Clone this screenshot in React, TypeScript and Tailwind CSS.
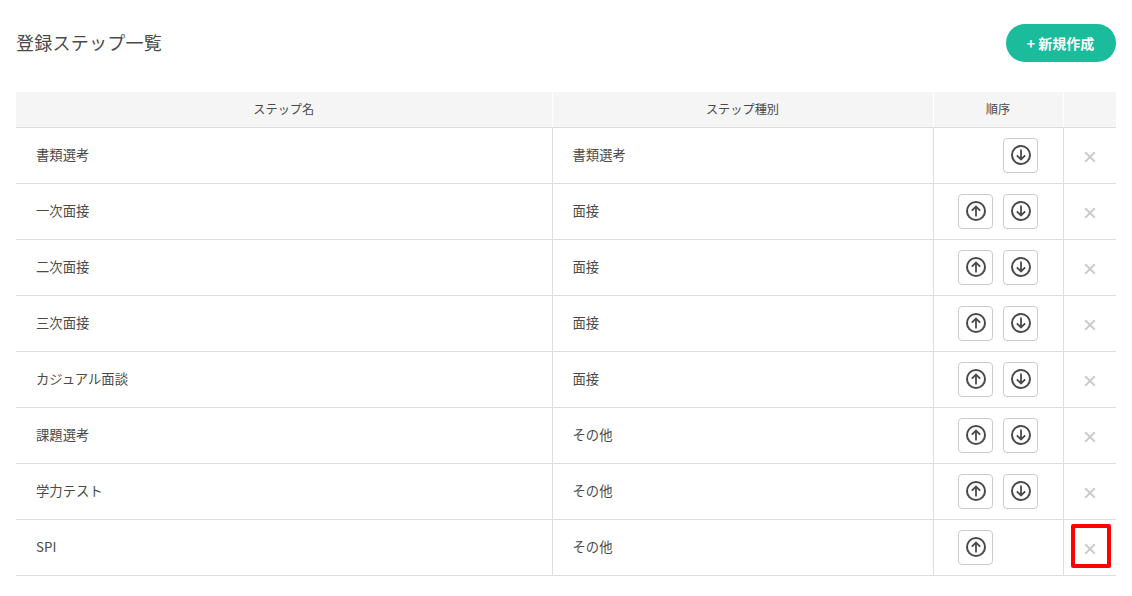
import React from "react";

const rows = [
  { name: "書類選考", type: "書類選考", up: false, down: true },
  { name: "一次面接", type: "面接", up: true, down: true },
  { name: "二次面接", type: "面接", up: true, down: true },
  { name: "三次面接", type: "面接", up: true, down: true },
  { name: "カジュアル面談", type: "面接", up: true, down: true },
  { name: "課題選考", type: "その他", up: true, down: true },
  { name: "学力テスト", type: "その他", up: true, down: true },
  { name: "SPI", type: "その他", up: true, down: false },
];

function ArrowBtn({ dir, hidden }: { dir: "up" | "down"; hidden: boolean }) {
  return (
    <button
      className={`flex h-[35px] w-[35px] items-center justify-center rounded-[4px] border border-[#cccccc] bg-white ${hidden ? "invisible" : ""}`}
    >
      <svg width="20" height="20" viewBox="0 0 20 20" fill="none" stroke="#4a4a4a" strokeWidth="2">
        <circle cx="10" cy="10" r="9" />
        {dir === "up" ? (
          <path d="M10 15.5V5.5M5.8 9.7L10 5.5L14.2 9.7" strokeWidth="1.8" />
        ) : (
          <path d="M10 4.5v10M5.8 10.3L10 14.5L14.2 10.3" strokeWidth="1.8" />
        )}
      </svg>
    </button>
  );
}

export default function App() {
  return (
    <div className="min-h-[596px] bg-white px-4 pt-6 text-[#4a4a4a] font-['Noto_Sans_CJK_JP','Noto_Sans',sans-serif]">
      <div className="flex h-[38px] items-center justify-between">
        <h1 className="-translate-y-[1px] text-[18px] tracking-[0.25px] text-[#4a4a4a]">登録ステップ一覧</h1>
        <button className="h-[38px] w-[110px] rounded-full bg-[#1abc9c] pr-[1px] text-[14px] font-bold text-white">
          + 新規作成
        </button>
      </div>
      <table className="mt-[30px] w-[1100px] table-fixed border-collapse text-[13.33px]">
        <colgroup>
          <col className="w-[536px]" />
          <col className="w-[381px]" />
          <col className="w-[130px]" />
          <col className="w-[53px]" />
        </colgroup>
        <thead>
          <tr className="h-[35px] bg-[#f5f5f5] text-[12.2px]">
            <th className="border-r border-b border-r-white border-b-[#dddddd] font-normal">ステップ名</th>
            <th className="border-r border-b border-r-white border-b-[#dddddd] font-normal">ステップ種別</th>
            <th className="border-r border-b border-r-white border-b-[#dddddd] font-normal">順序</th>
            <th className="border-b border-b-[#dddddd] font-normal"></th>
          </tr>
        </thead>
        <tbody>
          {rows.map((r, i) => (
            <tr key={r.name} className="h-[56px]">
              <td className="border-r border-b border-[#dddddd] pl-5">{r.name}</td>
              <td className="border-r border-b border-[#dddddd] pl-5">{r.type}</td>
              <td className="border-r border-b border-[#dddddd]">
                <div className="flex justify-center gap-[10px]">
                  <ArrowBtn dir="up" hidden={!r.up} />
                  <ArrowBtn dir="down" hidden={!r.down} />
                </div>
              </td>
              <td className="relative border-b border-[#dddddd]">
                <div className="flex translate-y-[2px] justify-center">
                  <svg width="12" height="12" viewBox="0 0 12 12" stroke="#cccccc" strokeWidth="2">
                    <path d="M1.2 1.2L10.8 10.8M10.8 1.2L1.2 10.8" />
                  </svg>
                </div>
                {i === rows.length - 1 && (
                  <div className="absolute left-[7px] top-[4px] h-[44px] w-[40px] rounded-[2px] border-4 border-[#ff0000]" />
                )}
              </td>
            </tr>
          ))}
        </tbody>
      </table>
    </div>
  );
}
